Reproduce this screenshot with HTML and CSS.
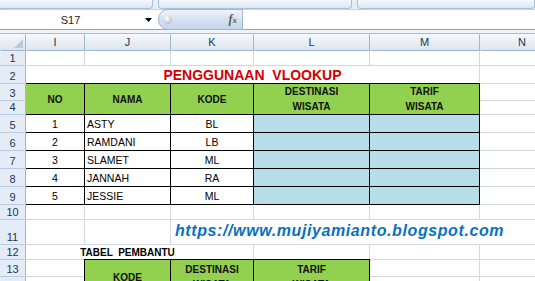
FILE: index.html
```html
<!DOCTYPE html>
<html lang="id">
<head>
    <meta charset="UTF-8">
    <title>Penggunaan VLOOKUP</title>
    <link rel="stylesheet" href="styles.css">
</head>
<body>
    <div class="ribbon">
        <div class="tab tab-first"></div>
        <div class="tab tab-mid"></div>
        <div class="tab tab-last"></div>
    </div>

    <div class="formula-bar">
        <div class="namebox">
            <span class="cell-ref">S17</span>
            <svg class="drop" width="7" height="4" viewBox="0 0 7 4"><path d="M0 0h7L3.5 4z" fill="#000"/></svg>
        </div>
        <div class="fx-pill">
            <span class="knob"></span>
            <span class="fx">f<small>x</small></span>
        </div>
        <div class="formula-input"></div>
    </div>
    <div class="bar-gap"></div>

    <div class="sheet">
        <!-- column headers -->
        <div class="corner"><span class="corner-mark"></span></div>
        <div class="ch">I</div>
        <div class="ch">J</div>
        <div class="ch">K</div>
        <div class="ch">L</div>
        <div class="ch">M</div>
        <div class="ch">N</div>

        <!-- row 1 -->
        <div class="rh">1</div>
        <div class="c"></div><div class="c"></div><div class="c"></div>
        <div class="c"></div><div class="c"></div><div class="c"></div>

        <!-- row 2 -->
        <div class="rh">2</div>
        <div class="title">PENGGUNAAN  VLOOKUP</div>
        <div class="c"></div>

        <!-- rows 3 - 9 -->
        <div class="tbl tbl-main">
            <div class="hd span2">NO</div>
            <div class="hd span2">NAMA</div>
            <div class="hd span2">KODE</div>
            <div class="hd span2">DESTINASI<br>WISATA</div>
            <div class="hd span2">TARIF<br>WISATA</div>

            <div class="w ctr">1</div><div class="w">ASTY</div><div class="w ctr">BL</div><div class="b"></div><div class="b"></div>
            <div class="w ctr">2</div><div class="w">RAMDANI</div><div class="w ctr">LB</div><div class="b"></div><div class="b"></div>
            <div class="w ctr">3</div><div class="w">SLAMET</div><div class="w ctr">ML</div><div class="b"></div><div class="b"></div>
            <div class="w ctr">4</div><div class="w">JANNAH</div><div class="w ctr">RA</div><div class="b"></div><div class="b"></div>
            <div class="w ctr">5</div><div class="w">JESSIE</div><div class="w ctr">ML</div><div class="b"></div><div class="b"></div>
        </div>
        <div class="rh">3</div><div class="c"></div>
        <div class="rh">4</div><div class="c"></div>
        <div class="rh">5</div><div class="c"></div>
        <div class="rh">6</div><div class="c"></div>
        <div class="rh">7</div><div class="c"></div>
        <div class="rh">8</div><div class="c"></div>
        <div class="rh">9</div><div class="c"></div>

        <!-- row 10 -->
        <div class="rh">10</div>
        <div class="c"></div><div class="c"></div><div class="c"></div>
        <div class="c"></div><div class="c"></div><div class="c"></div>

        <!-- row 11 -->
        <div class="rh rh-tall">11</div>
        <div class="c"></div><div class="c"></div>
        <div class="url">https://www.mujiyamianto.blogspot.com</div>

        <!-- row 12 -->
        <div class="rh">12</div>
        <div class="label">TABEL  PEMBANTU</div>
        <div class="c"></div><div class="c"></div><div class="c"></div>

        <!-- rows 13 - 14 -->
        <div class="rh">13</div>
        <div class="c"></div>
        <div class="tbl tbl-help">
            <div class="hd">KODE</div>
            <div class="hd">DESTINASI<br>WISATA</div>
            <div class="hd">TARIF<br>WISATA</div>
        </div>
        <div class="c"></div><div class="c"></div>
        <div class="rh">14</div>
        <div class="c"></div>
        <div class="c"></div><div class="c"></div>
    </div>
</body>
</html>
```

FILE: styles.css
```css
body {
    margin: 0;
    width: 535px;
    height: 281px;
    overflow: hidden;
    background-color: #fff;
    font-family: "Liberation Sans", Arial, sans-serif;
}

/* ribbon edge + formula bar */
.ribbon {
    height: 9px;
    display: flex;
    gap: 5px;
    background-color: #e6eef8;
}
.ribbon .tab {
    height: 8px;
    background: linear-gradient(#f4f8fd, #dce7f4);
    border: 1px solid #a9bfda;
    border-top: none;
    border-radius: 0 0 4px 4px;
}
.ribbon .tab-first {
    width: 153px;
    margin-left: -2px;
}
.ribbon .tab-mid {
    width: 192px;
}
.ribbon .tab-last {
    flex: 1;
}
.formula-bar {
    height: 19px;
    display: flex;
    border-top: 1px solid #c4d3e6;
    border-bottom: 1px solid #8aa3c3;
    background-color: #fff;
}
.namebox {
    width: 158px;
    display: flex;
    align-items: center;
}
.cell-ref {
    width: 141px;
    text-align: center;
    font-size: 11px;
    color: #2a2218;
}
.drop {
    margin-left: 4px;
}
.fx-pill {
    width: 83px;
    display: flex;
    align-items: center;
    justify-content: space-between;
    border: 1px solid #a1b7d3;
    border-radius: 10px 0 0 10px;
    background: linear-gradient(#eef4fb, #d3e0f1 55%, #c4d5eb);
    margin: -1px 0;
}
.knob {
    width: 9px;
    height: 9px;
    margin-left: 4px;
    border-radius: 50%;
    background: radial-gradient(circle at 40% 35%, #ffffff, #c9ced6 60%, #9ea6b2);
}
.fx {
    margin-right: 5px;
    font-family: "Liberation Serif", serif;
    font-style: italic;
    font-weight: bold;
    font-size: 12px;
    color: #5b5b5b;
}
.fx small {
    font-size: 9px;
}
.formula-input {
    flex: 1;
}
.bar-gap {
    height: 3px;
    background-color: #eef3f9;
    border-bottom: 1px solid #a6bcd6;
}

/* worksheet */
.sheet {
    display: grid;
    grid-template-columns: 25px 58px 85px 82px 115px 109px 84px;
    grid-template-rows: 16px 14px 17px 16px 13px repeat(5, 17px) 14px 24px 14px 16px 17px;
    gap: 1px;
    background-color: #d0d7e5;
    font-size: 10.5px;
    color: #000;
}
.sheet > div {
    background-color: #fff;
}
.sheet .corner,
.sheet .ch {
    background: linear-gradient(#f7f9fc, #e9eef5 50%, #dde5ef);
    box-shadow: 1px 1px 0 #9eb6ce;
}
.sheet .ch {
    display: flex;
    align-items: center;
    justify-content: center;
    font-size: 11px;
    color: #27364c;
}
.corner {
    display: flex;
    align-items: flex-end;
    justify-content: flex-end;
}
.corner-mark {
    width: 9px;
    height: 9px;
    margin: 0 2px 2px 0;
    background-color: #b9cbe0;
    clip-path: polygon(100% 0, 100% 100%, 0 100%);
}
.sheet .rh {
    display: flex;
    align-items: flex-end;
    justify-content: center;
    padding-bottom: 1px;
    background-color: #e4ecf7;
    box-shadow: 1px 0 0 #9eb6ce, 0 1px 0 #bccce0;
    font-size: 11px;
    color: #1f3553;
}

.sheet .title {
    grid-column: 2 / span 5;
    grid-row: 3;
    text-align: center;
    white-space: pre;
    line-height: 17px;
    padding-top: 1px;
    font-size: 14px;
    font-weight: bold;
    color: #d40000;
}
.sheet .url {
    grid-column: 4 / span 4;
    grid-row: 12;
    display: flex;
    align-items: flex-end;
    padding: 0 0 4px 4px;
    white-space: nowrap;
    font-size: 16px;
    letter-spacing: 0.6px;
    font-weight: bold;
    font-style: italic;
    color: #0a70c0;
}
.sheet .label {
    grid-column: 2 / span 3;
    grid-row: 13;
    display: flex;
    align-items: flex-end;
    justify-content: center;
    padding: 0 24px 1px 0;
    white-space: pre;
    font-size: 10px;
    font-weight: bold;
}

/* bordered tables */
.sheet .tbl {
    display: grid;
    gap: 1px;
    background-color: #000;
}
.sheet .tbl-main {
    grid-column: 2 / span 5;
    grid-row: 4 / span 7;
    margin: -1px -1px -1px 0;
    padding: 1px 1px 1px 0;
    grid-template-columns: 58px 85px 82px 115px 109px;
    grid-template-rows: 16px 13px repeat(5, 17px);
}
.sheet .tbl-help {
    grid-column: 3 / span 3;
    grid-row: 14 / span 2;
    margin: -1px;
    padding: 1px;
    grid-template-columns: 85px 82px 115px;
}
.tbl .hd {
    display: flex;
    align-items: center;
    justify-content: center;
    text-align: center;
    line-height: 15px;
    font-size: 10px;
    font-weight: bold;
    color: #111;
    background-color: #92d050;
}
.tbl .span2 {
    grid-row: span 2;
}
.tbl .w,
.tbl .b {
    display: flex;
    align-items: flex-end;
    padding: 0 2px 2px;
}
.tbl .w {
    background-color: #fff;
}
.tbl .b {
    background-color: #b7dee8;
}
.tbl .ctr {
    justify-content: center;
}
```
